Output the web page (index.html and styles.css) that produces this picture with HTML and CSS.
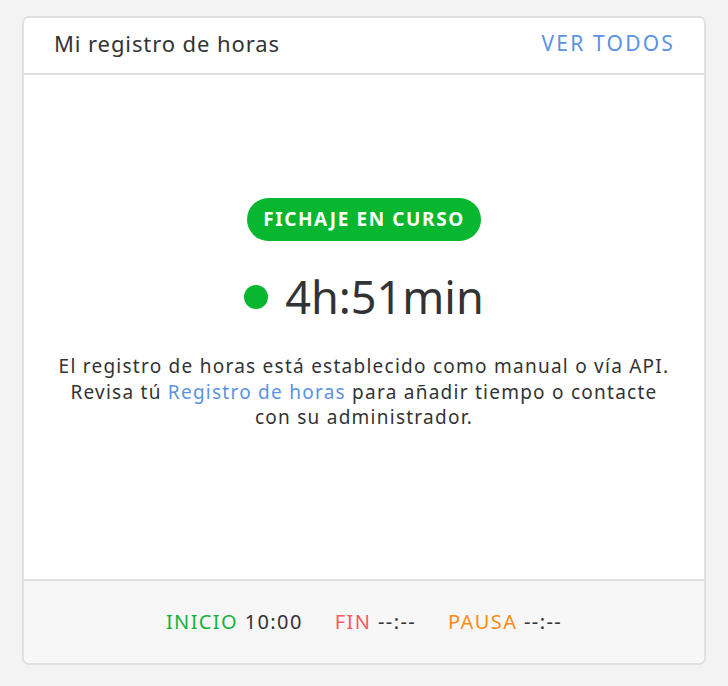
FILE: index.html
```html
<!DOCTYPE html>
<html lang="es">
<head>
    <meta charset="UTF-8">
    <meta name="viewport" content="width=device-width, initial-scale=1.0">
    <title>Mi registro de horas</title>
    <link rel="stylesheet" href="styles.css">
</head>
<body>

    <div class="card">
        <div class="card-header">
            <span class="card-title">Mi registro de horas</span>
            <a class="see-all" href="#">VER TODOS</a>
        </div>
        <div class="card-body">
            <span class="badge">FICHAJE EN CURSO</span>
            <div class="timer">
                <span class="dot"></span>
                <span class="time">4h:51min</span>
            </div>
            <p class="note">
                El registro de horas está establecido como manual o vía API.<br>
                Revisa tú <a href="#">Registro de horas</a> para añadir tiempo o contacte<br>
                con su administrador.
            </p>
        </div>
        <div class="card-footer">
            <span><span class="start">INICIO</span> 10:00</span>
            <span><span class="end">FIN</span> --:--</span>
            <span><span class="pause">PAUSA</span> --:--</span>
        </div>
    </div>

</body>
</html>
```

FILE: styles.css
```css
body {
    margin: 0;
    padding: 16px 22px 20px;
    background-color: #f3f3f3;
    font-family: "Noto Sans", sans-serif;
    color: #333;
}
.card {
    border: 2px solid #e0e0e0;
    border-radius: 7px;
    background-color: #fff;
    overflow: hidden;
}
.card-header {
    display: flex;
    justify-content: space-between;
    align-items: center;
    height: 57px;
    padding: 0 29px 6px 30px;
    box-sizing: border-box;
    border-bottom: 2px solid #e0e0e0;
}
.card-title {
    font-size: 22px;
    letter-spacing: 0.9px;
}
.see-all {
    color: #5a93e0;
    text-decoration: none;
    font-size: 21px;
    letter-spacing: 2.2px;
}
.card-body {
    height: 504px;
    box-sizing: border-box;
    padding-top: 123px;
    display: flex;
    flex-direction: column;
    align-items: center;
    text-align: center;
}
.badge {
    background-color: #06b72f;
    color: #fff;
    font-weight: bold;
    font-size: 19px;
    letter-spacing: 1.6px;
    padding: 0 16px;
    height: 43px;
    line-height: 43px;
    border-radius: 22px;
}
.timer {
    display: flex;
    align-items: center;
    gap: 17px;
    margin-top: 27px;
    height: 58px;
}
.dot {
    width: 24px;
    height: 24px;
    border-radius: 50%;
    background-color: #06b72f;
}
.time {
    font-size: 45px;
    line-height: 58px;
}
.note {
    font-size: 19px;
    line-height: 25.5px;
    letter-spacing: 1.25px;
    margin: 28px 0 0;
}
.note a {
    color: #5a93e0;
    text-decoration: none;
}
.card-footer {
    display: flex;
    justify-content: center;
    align-items: center;
    gap: 32px;
    height: 84px;
    padding-bottom: 1px;
    box-sizing: border-box;
    background-color: #f7f7f7;
    border-top: 2px solid #e0e0e0;
    font-size: 20px;
    letter-spacing: 1.4px;
}
.start {
    color: #13b33a;
}
.end {
    color: #ff5a5f;
}
.pause {
    color: #ff8a12;
}
```
